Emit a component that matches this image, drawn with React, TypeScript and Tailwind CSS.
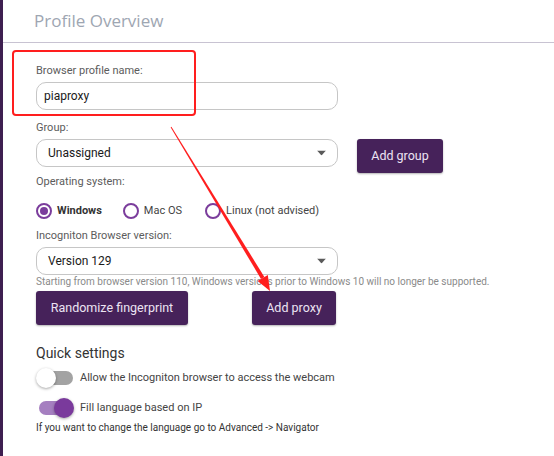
import React from "react";

const Caret = () => (
  <svg width="9" height="5" viewBox="0 0 9 5" className="absolute right-[11px] top-1/2 -translate-y-1/2">
    <polygon points="0,0 9,0 4.5,5" fill="#5a5a5a" />
  </svg>
);

const Radio = ({ checked, label }: { checked?: boolean; label: string }) => (
  <div className="flex items-center gap-[5px]">
    <div className="w-[16px] h-[16px] rounded-full border-2 border-[#7b3d9c] flex items-center justify-center">
      {checked && <div className="w-[8px] h-[8px] rounded-full bg-[#7b3d9c]" />}
    </div>
    <span className={checked ? "font-bold text-[#333] text-[11px]" : "text-[#444] text-[11px]"}>{label}</span>
  </div>
);

const Toggle = ({ on, label }: { on?: boolean; label: string }) => (
  <div className="flex items-center gap-[6px] h-[22px]">
    <div className="relative w-[38px] h-[20px]">
      <div className={"absolute left-[3px] top-[3px] w-[34px] h-[14px] rounded-full " + (on ? "bg-[#a57fc0]" : "bg-[#a3a3a3]")} />
      <div
        className={
          "absolute top-0 w-[20px] h-[20px] rounded-full shadow-[0_1px_3px_rgba(0,0,0,0.35)] " +
          (on ? "left-[18px] bg-[#7a3a9c]" : "left-0 bg-white")
        }
      />
    </div>
    <span className="text-[11px] text-[#444]">{label}</span>
  </div>
);

const Btn = ({ w, children }: { w: string; children: React.ReactNode }) => (
  <div
    className={
      w +
      " h-[34px] bg-[#46225a] rounded-[3px] flex items-center justify-center text-[12.5px] text-[#ece4f3] shadow-[0_1px_2px_rgba(0,0,0,0.3)]"
    }
  >
    {children}
  </div>
);

export default function App() {
  return (
    <div
      className="relative flex w-[554px] h-[456px] bg-white overflow-hidden"
      style={{ fontFamily: "Roboto, 'Liberation Sans', sans-serif" }}
    >
      <div className="w-[3px] bg-[#3e1f50] shrink-0" />
      <div className="flex-1 flex flex-col">
        <div className="h-[43px] border-b border-[#c8c3d2] flex items-center pl-[31px] shrink-0">
          <span className="text-[17px] text-[#9ea6b2]" style={{ fontFamily: "'Open Sans', sans-serif" }}>
            Profile Overview
          </span>
        </div>
        <div className="flex flex-col pl-[33px]">
          <div className="mt-[20px] h-[16px] leading-[16px] text-[11px] text-[#5c5c5c]">Browser profile name:</div>
          <div className="mt-[3px] w-[302px] h-[28px] border border-[#c6c6c6] rounded-[10px] flex items-center pl-[7px] text-[12px] text-[#1a1a1a]">
            piaproxy
          </div>
          <div className="mt-[10px] h-[16px] leading-[16px] text-[11px] text-[#5c5c5c]">Group:</div>
          <div className="mt-[3px] flex items-start gap-[19px]">
            <div className="relative w-[302px] h-[28px] border border-[#c6c6c6] rounded-[10px] flex items-center pl-[11px] text-[12px] text-[#1a1a1a]">
              Unassigned
              <Caret />
            </div>
            <Btn w="w-[86px]">Add group</Btn>
          </div>
          <div className="mt-[1px] h-[16px] leading-[16px] text-[11px] text-[#5c5c5c]">Operating system:</div>
          <div className="mt-[13px] h-[16px] flex items-center">
            <Radio checked label="Windows" />
            <div className="ml-[21px]">
              <Radio label="Mac OS" />
            </div>
            <div className="ml-[23px]">
              <Radio label="Linux (not advised)" />
            </div>
          </div>
          <div className="mt-[9px] h-[16px] leading-[16px] text-[11px] text-[#5c5c5c]">Incogniton Browser version:</div>
          <div className="mt-[3px] relative w-[302px] h-[28px] border border-[#c6c6c6] rounded-[10px] flex items-center pl-[11px] text-[12px] text-[#1a1a1a]">
            Version 129
            <Caret />
          </div>
          <div className="h-[14px] leading-[14px] mt-[0px] text-[10px] text-[#8a8a8a] whitespace-nowrap">
            Starting from browser version 110, Windows versions prior to Windows 10 will no longer be supported.
          </div>
          <div className="mt-[2px] flex items-center gap-[64px]">
            <Btn w="w-[152px]">Randomize fingerprint</Btn>
            <Btn w="w-[84px]">Add proxy</Btn>
          </div>
          <div className="mt-[17px] h-[22px] leading-[22px] text-[14px] text-[#333]">Quick settings</div>
          <div className="mt-[3px] flex flex-col gap-[8px]">
            <Toggle label="Allow the Incogniton browser to access the webcam" />
            <Toggle on label="Fill language based on IP" />
          </div>
          <div className="mt-[2px] h-[14px] leading-[14px] text-[10px] text-[#333]">
            If you want to change the language go to Advanced -&gt; Navigator
          </div>
        </div>
      </div>

      {/* annotation overlay */}
      <div className="absolute left-[12px] top-[50px] w-[184px] h-[66px] border-2 border-[#ff1e1e] rounded-[4px] pointer-events-none" />
      <svg className="absolute left-0 top-0 pointer-events-none" width="554" height="456" viewBox="0 0 554 456">
        <polygon points="171.4,126.7 170.6,127.3 261,279 264.4,277" fill="#ff1e1e" />
        <polygon points="270,291 267.8,274.9 257.6,281.1" fill="#ff1e1e" />
      </svg>
    </div>
  );
}
